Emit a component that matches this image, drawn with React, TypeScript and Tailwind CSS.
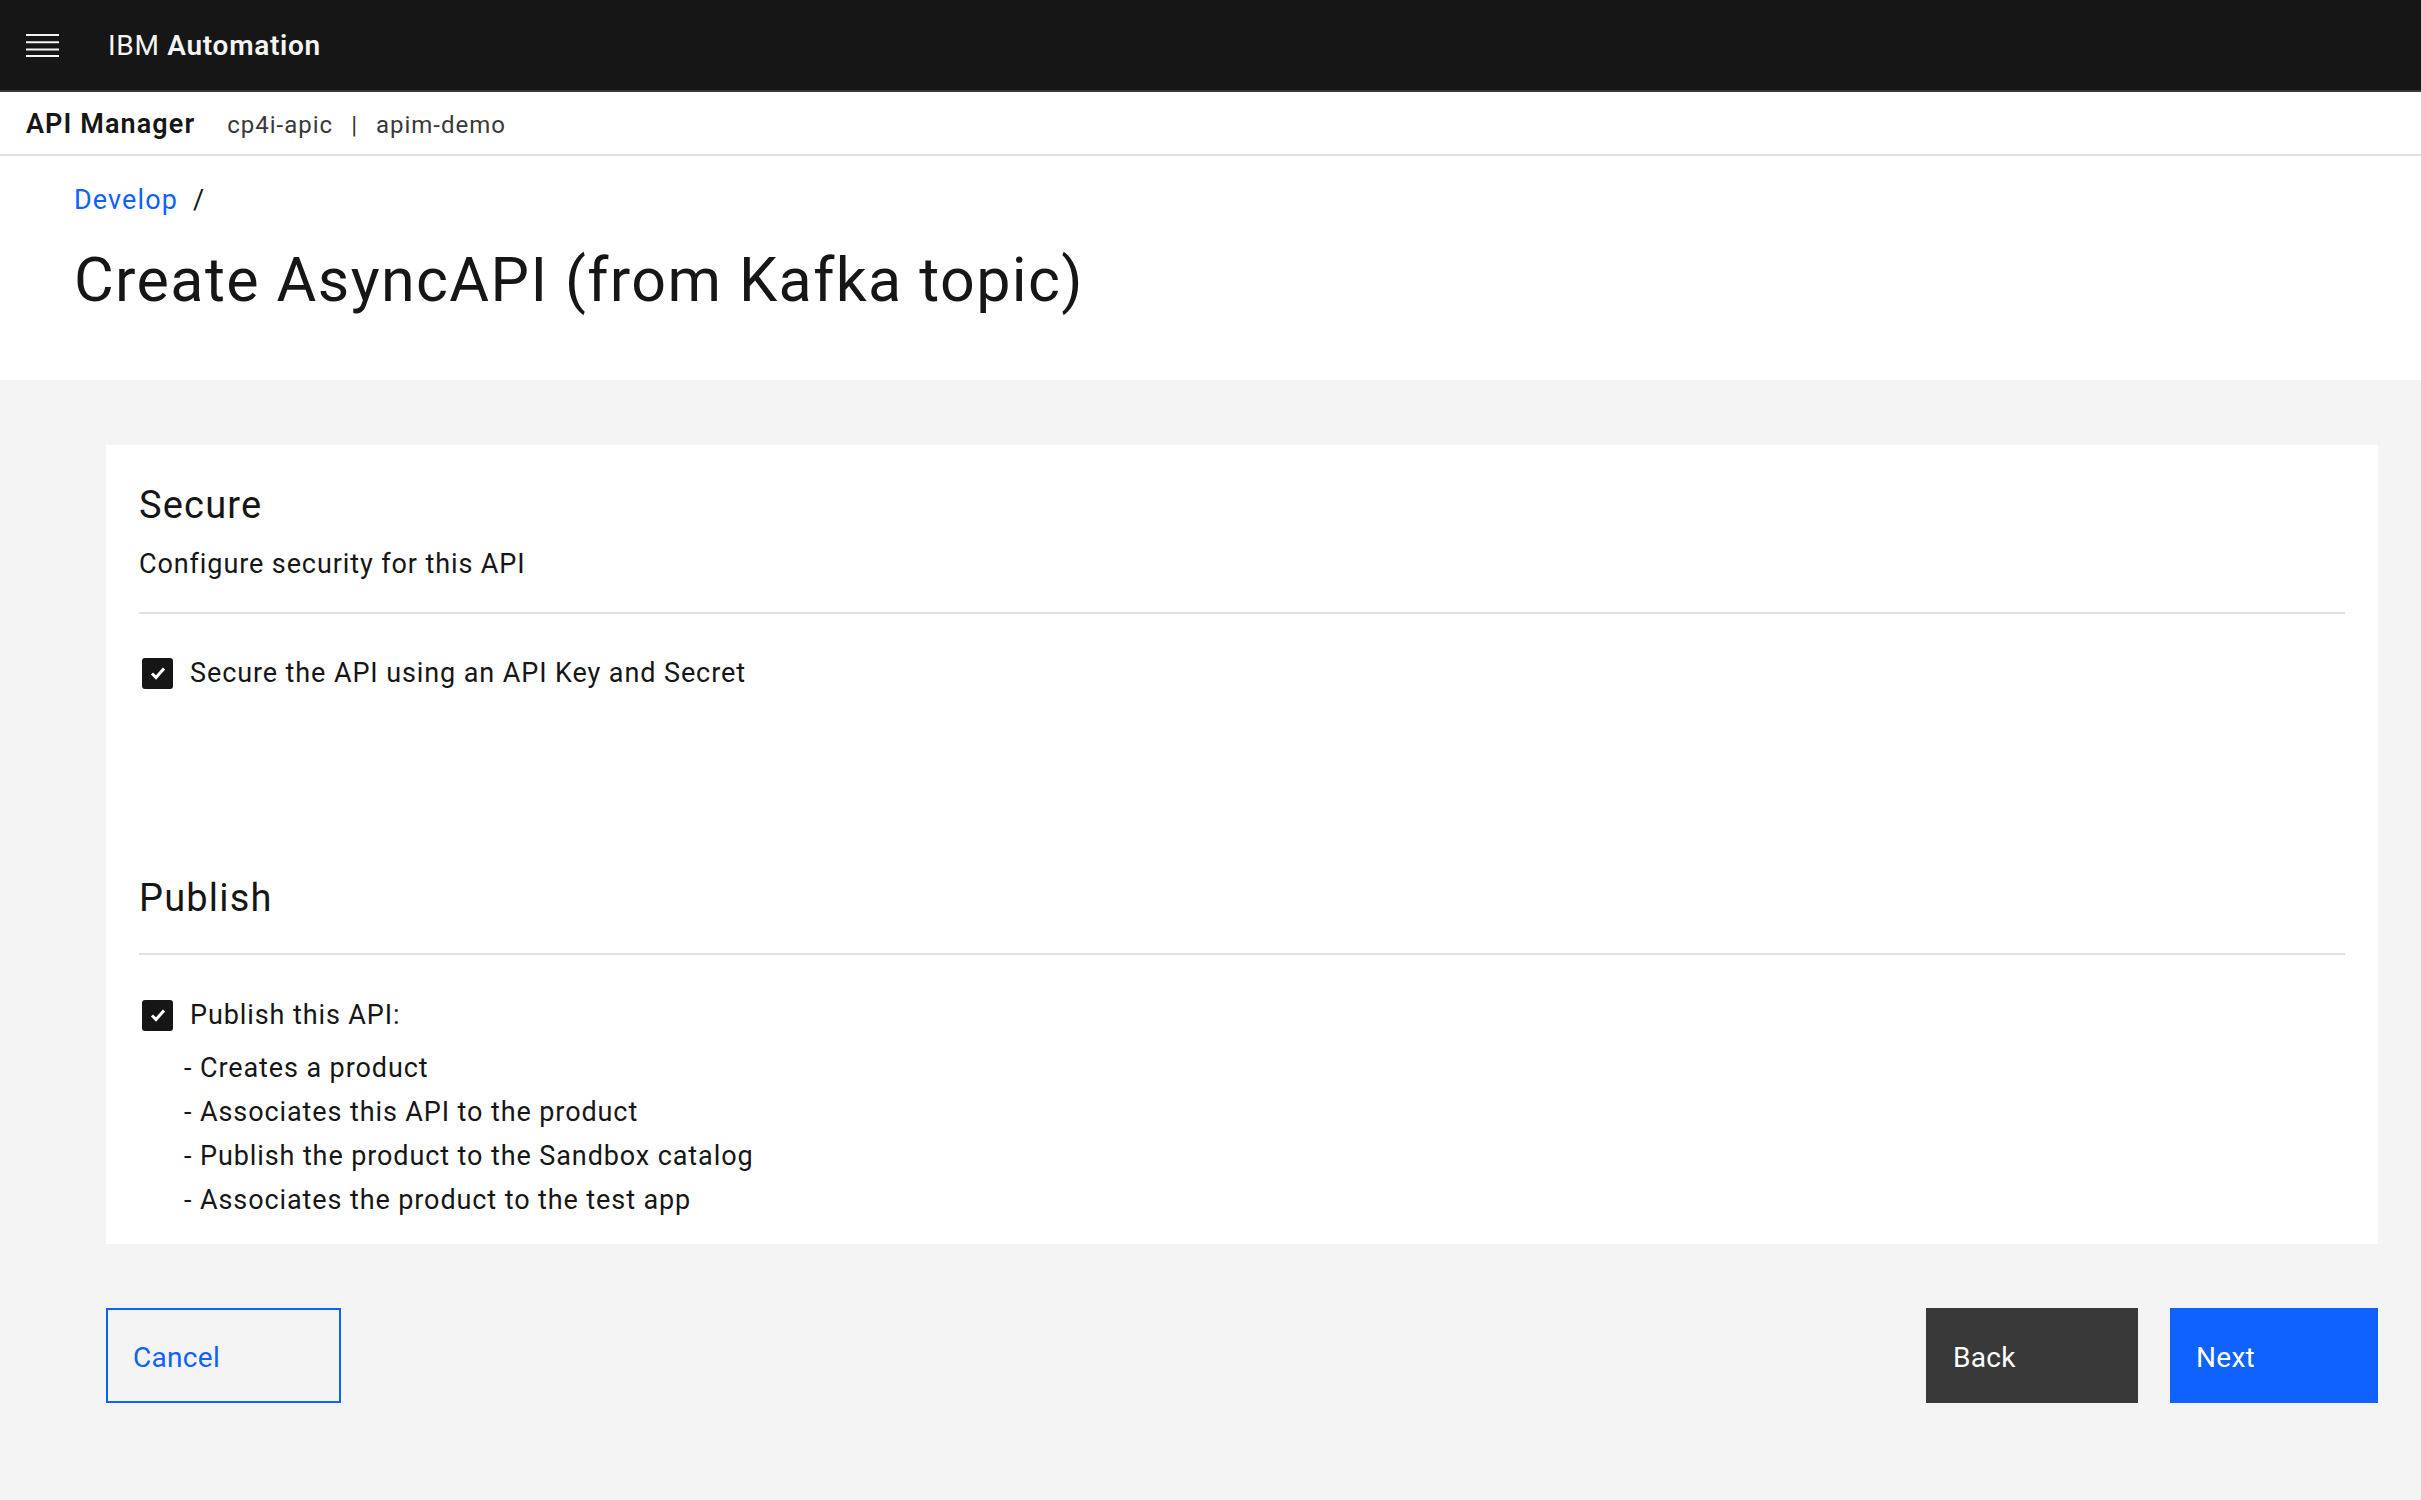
import { useState } from 'react'

const PUBLISH_STEPS = [
  'Creates a product',
  'Associates this API to the product',
  'Publish the product to the Sandbox catalog',
  'Associates the product to the test app',
]

function MenuIcon() {
  return (
    <svg width="33" height="24" viewBox="0 0 33 24" fill="none">
      <path d="M0 2h33M0 9.3h33M0 16.6h33M0 23h33" stroke="#f4f4f4" strokeWidth="2" />
    </svg>
  )
}

function Check({ checked, onToggle }: { checked: boolean; onToggle: () => void }) {
  return (
    <button
      className={
        'w-[31px] h-[31px] rounded-[3px] flex items-center justify-center shrink-0 ' +
        (checked ? 'bg-[#161616]' : 'bg-white border-2 border-[#161616]')
      }
      onClick={onToggle}
    >
      {checked && (
        <svg width="22" height="22" viewBox="0 0 22 22" fill="none">
          <path d="M5 11.5l4 4 8-9" stroke="white" strokeWidth="3" />
        </svg>
      )}
    </button>
  )
}

export default function App() {
  const [secure, setSecure] = useState(true)
  const [publish, setPublish] = useState(true)

  return (
    <div className="min-h-screen bg-[#f4f4f4] text-[#161616] tracking-[0.9px] font-['Roboto','Liberation_Sans',sans-serif]">
      {/* TOP BAR */}
      <header className="h-[92px] bg-[#161616] border-b-2 border-[#393939] flex items-center">
        <div className="ml-[26px] flex items-center">
          <MenuIcon />
        </div>
        <div className="ml-[49px] mt-[2px] text-[28px] text-[#f4f4f4] tracking-[0.7px]">
          IBM <span className="font-semibold">Automation</span>
        </div>
      </header>

      {/* PRODUCT BAR */}
      <div className="h-[64px] bg-white border-b-2 border-[#e0e0e0] flex items-center pl-[26px] pt-[3px]">
        <span className="text-[27px] font-semibold tracking-[1.1px]">API Manager</span>
        <span className="ml-[32px] text-[24px] text-[#393939] tracking-[1px]">cp4i-apic</span>
        <span className="ml-[18px] text-[24px] text-[#393939]">|</span>
        <span className="ml-[18px] text-[24px] text-[#393939] tracking-[1px]">apim-demo</span>
      </div>

      {/* PAGE HEADER */}
      <div className="bg-white h-[224px] pl-[74px] pt-[26px]">
        <div className="h-[36px] flex items-center text-[27px] tracking-[1.1px]">
          <a className="text-[#0f62fe]">Develop</a>
          <span className="ml-[15px]">/</span>
        </div>
        <h1 className="mt-[26px] h-[72px] leading-[72px] text-[61px] font-normal tracking-[1.4px]">
          Create AsyncAPI (from Kafka topic)
        </h1>
      </div>

      {/* FORM */}
      <main className="pt-[65px] pl-[106px] pr-[43px]">
        <div className="bg-white px-[33px] pt-[36px] pb-[22px]">
          <h2 className="h-[48px] leading-[48px] text-[38px] tracking-[1.2px]">Secure</h2>
          <p className="mt-[17px] h-[36px] leading-[36px] text-[27px]">Configure security for this API</p>
          <div className="mt-[30px] h-[2px] bg-[#e0e0e0]" />
          <label className="mt-[41px] h-[36px] flex items-center gap-[17px] text-[27px] pl-[3px]">
            <Check checked={secure} onToggle={() => setSecure(!secure)} />
            Secure the API using an API Key and Secret
          </label>

          <h2 className="mt-[183px] h-[48px] leading-[48px] text-[38px] tracking-[1.2px]">Publish</h2>
          <div className="mt-[31px] h-[2px] bg-[#e0e0e0]" />
          <label className="mt-[42px] h-[36px] flex items-center gap-[17px] text-[27px] pl-[3px]">
            <Check checked={publish} onToggle={() => setPublish(!publish)} />
            Publish this API:
          </label>
          <ul className="mt-[13px] pl-[45px] text-[27px]">
            {PUBLISH_STEPS.map(step => (
              <li key={step} className="h-[44px] leading-[44px]">- {step}</li>
            ))}
          </ul>
        </div>

        {/* ACTIONS */}
        <div className="mt-[64px] flex items-start tracking-[0.3px]">
          <button className="w-[235px] h-[95px] border-2 border-[#0f62fe] text-[#0f62fe] text-[28px] text-left pl-[25px] pt-[4px]">
            Cancel
          </button>
          <div className="ml-auto flex gap-[32px]">
            <button className="w-[212px] h-[95px] bg-[#393939] text-white text-[28px] text-left pl-[27px] pt-[4px]">
              Back
            </button>
            <button className="w-[208px] h-[95px] bg-[#0f62fe] text-white text-[28px] text-left pl-[26px] pt-[4px]">
              Next
            </button>
          </div>
        </div>
      </main>
    </div>
  )
}
